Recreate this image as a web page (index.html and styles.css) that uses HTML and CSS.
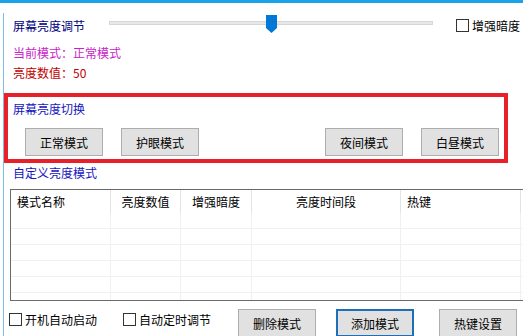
FILE: index.html
```html
<!DOCTYPE html>
<html lang="zh-CN">
<head>
  <meta charset="UTF-8">
  <meta name="viewport" content="width=device-width, initial-scale=1.0">
  <title>屏幕亮度调节</title>
  <link rel="stylesheet" href="styles.css">
</head>
<body>

  <div class="window">
    <div class="frame">

      <!-- brightness slider -->
      <div class="top-row">
        <div class="title">屏幕亮度调节</div>
        <div class="slider">
          <div class="track"></div>
          <div class="thumb"></div>
        </div>
        <label class="chk chk-dark">
          <span class="box"></span>增强暗度
        </label>
      </div>

      <div class="info mode">当前模式：正常模式</div>
      <div class="info level">亮度数值：50</div>

      <!-- preset modes -->
      <div class="group">
        <div class="group-title">屏幕亮度切换</div>
        <div class="group-buttons">
          <button class="btn">正常模式</button>
          <button class="btn">护眼模式</button>
          <button class="btn btn-far">夜间模式</button>
          <button class="btn">白昼模式</button>
        </div>
      </div>

      <div class="section-label">自定义亮度模式</div>

      <div class="grid">
        <div class="grid-head">
          <div class="cell c1 left">模式名称</div>
          <div class="cell c2">亮度数值</div>
          <div class="cell c3">增强暗度</div>
          <div class="cell c4">亮度时间段</div>
          <div class="cell c5 left">热键</div>
        </div>
        <div class="grid-row"><div class="cell c1"></div><div class="cell c2"></div><div class="cell c3"></div><div class="cell c4"></div><div class="cell c5"></div></div>
        <div class="grid-row"><div class="cell c1"></div><div class="cell c2"></div><div class="cell c3"></div><div class="cell c4"></div><div class="cell c5"></div></div>
        <div class="grid-row"><div class="cell c1"></div><div class="cell c2"></div><div class="cell c3"></div><div class="cell c4"></div><div class="cell c5"></div></div>
        <div class="grid-row"><div class="cell c1"></div><div class="cell c2"></div><div class="cell c3"></div><div class="cell c4"></div><div class="cell c5"></div></div>
        <div class="grid-row"><div class="cell c1"></div><div class="cell c2"></div><div class="cell c3"></div><div class="cell c4"></div><div class="cell c5"></div></div>
        <div class="grid-row"><div class="cell c1"></div><div class="cell c2"></div><div class="cell c3"></div><div class="cell c4"></div><div class="cell c5"></div></div>
      </div>

      <div class="bottom-row">
        <label class="chk chk-boot"><span class="box"></span>开机自动启动</label>
        <label class="chk chk-timer"><span class="box"></span>自动定时调节</label>
        <button class="btn btn-del">删除模式</button>
        <button class="btn btn-add">添加模式</button>
        <button class="btn btn-hotkey">热键设置</button>
      </div>

    </div>
  </div>

</body>
</html>
```

FILE: styles.css
```css
* {
  box-sizing: border-box;
}

body {
  margin: 0;
  width: 523px;
  height: 336px;
  overflow: hidden;
  font-family: "Noto Sans CJK SC", "Noto Sans", sans-serif;
  font-size: 12px;
  color: #000;
  background: #fff;
}

.window {
  height: 336px;
  border-top: 3px solid #1aa3e8;
}

.frame {
  height: 333px;
  margin-left: 3px;
  border-left: 1px solid #7dbde3;
}

/* top row: title + slider + checkbox */
.top-row {
  display: flex;
  align-items: center;
  height: 25px;
  margin-top: 10px;
}

.title {
  width: 72px;
  margin-left: 9px;
  color: #000080;
}

.slider {
  position: relative;
  align-self: flex-start;
  width: 324px;
  height: 18px;
  margin-top: 2px;
  margin-left: 24px;
}

.track {
  margin-top: 6px;
  height: 4px;
  background: #e7e7e7;
  border: 1px solid #d6d6d6;
}

.thumb {
  position: absolute;
  top: 0;
  left: 50%;
  width: 11px;
  height: 18px;
  margin-left: -5px;
  background: #0078d7;
  clip-path: polygon(0 0, 100% 0, 100% 72%, 50% 100%, 0 72%);
}

.chk {
  display: flex;
  align-items: center;
  gap: 3px;
  height: 13px;
  white-space: nowrap;
}

.box {
  width: 13px;
  height: 13px;
  border: 1px solid #333;
  background: #fff;
}

.chk-dark {
  margin-left: 23px;
}

/* status lines */
.info {
  display: flex;
  align-items: center;
  height: 20px;
  padding-left: 9px;
}

.mode {
  margin-top: 4px;
  color: #c922c9;
}

.level {
  color: #c00000;
}

/* preset group */
.group {
  width: 504px;
  margin-top: 11px;
  padding: 2px 0 3px;
  border: 4px solid #e8202a;
}

.group-title {
  height: 19px;
  line-height: 19px;
  padding-left: 5px;
  color: #1515c0;
}

.group-buttons {
  display: flex;
  gap: 18px;
  margin-top: 10px;
  padding-left: 17px;
}

.btn {
  width: 78px;
  height: 28px;
  padding: 0;
  font: inherit;
  color: #000;
  background: #e1e1e1;
  border: 1px solid #adadad;
}

.btn-far {
  margin-left: 108px;
}

.section-label {
  height: 19px;
  line-height: 19px;
  padding-left: 9px;
  color: #1515c0;
}

/* custom modes list */
.grid {
  width: 520px;
  height: 112px;
  margin-top: 7px;
  margin-left: 6px;
  overflow: hidden;
  border-top: 1px solid #6a6a6a;
  border-left: 1px solid #6a6a6a;
  border-bottom: 1px solid #6a6a6a;
}

.grid-head,
.grid-row {
  display: flex;
}

.grid-head {
  height: 23px;
}

.grid-row {
  height: 16px;
  border-bottom: 1px solid #f0f0f0;
}

.cell {
  flex: none;
  height: 100%;
  border-right: 1px solid #f0f0f0;
}

.grid-head .cell {
  display: flex;
  align-items: center;
  justify-content: center;
  border-right-color: #e3e3e3;
}

.grid-head .left {
  justify-content: flex-start;
  padding-left: 6px;
}

.c1 { width: 100px; }
.c2 { width: 70px; }
.c3 { width: 71px; }
.c4 { width: 149px; }
.c5 { width: 120px; }

/* bottom controls */
.bottom-row {
  display: flex;
  align-items: flex-start;
  margin-top: 8px;
}

.bottom-row .chk {
  margin-top: 4px;
}

.chk-boot {
  margin-left: 5px;
}

.chk-timer {
  margin-left: 26px;
}

.btn-del {
  margin-left: 27px;
}

.btn-add {
  margin-left: 20px;
  border: 2px solid #1f6fb8;
}

.btn-hotkey {
  margin-left: 25px;
}
```
